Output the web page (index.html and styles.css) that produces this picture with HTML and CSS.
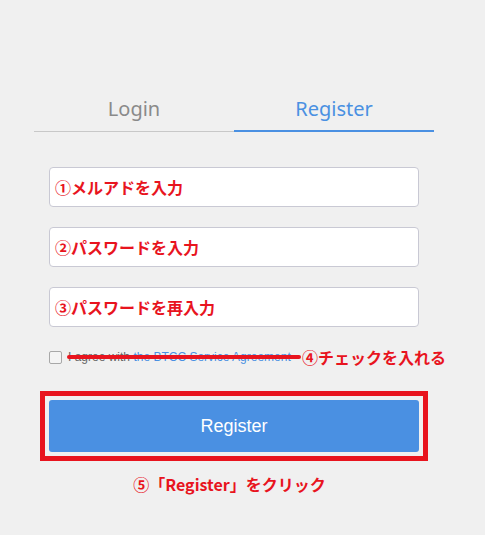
FILE: index.html
```html
<!DOCTYPE html>
<html>
<head>
<meta charset="utf-8">
<link rel="stylesheet" href="styles.css">
</head>
<body>
<div class="panel">
  <div class="tabs">
    <div class="tab">Login</div>
    <div class="tab active">Register</div>
  </div>
  <div class="form">
    <div class="field"><span class="note">①メルアドを入力</span></div>
    <div class="field"><span class="note">②パスワードを入力</span></div>
    <div class="field"><span class="note">③パスワードを再入力</span></div>
    <div class="agree">
      <span class="check"></span>
      <span class="agree-text">I agree with <span class="link">the BTCC Service Agreement</span></span>
      <span class="strike"></span>
      <span class="note note-check">④チェックを入れる</span>
    </div>
    <div class="btn-wrap">
      <button class="btn">Register</button>
      <div class="highlight"></div>
    </div>
    <div class="note note-click">⑤「Register」をクリック</div>
  </div>
</div>
</body>
</html>
```
FILE: styles.css
```css
html, body {
  margin: 0;
  padding: 0;
  background: #f0f0f0;
  width: 485px;
  height: 535px;
  overflow: hidden;
  font-family: "Noto Sans", "Noto Sans CJK JP", sans-serif;
}
.panel {
  width: 400px;
  margin-left: 34px;
  padding-top: 88px;
}
.tabs {
  display: flex;
}
.tab {
  flex: 1;
  text-align: center;
  font-size: 20px;
  line-height: 42px;
  height: 42px;
  color: #8a8a8a;
  border-bottom: 1px solid #c8c8c8;
  padding-bottom: 1px;
}
.tab.active {
  color: #4a90e2;
  border-bottom: 2px solid #4a90e2;
  padding-bottom: 0;
}
.form {
  padding: 0 15px;
  margin-top: 35px;
}
.field {
  box-sizing: border-box;
  height: 40px;
  background: #fff;
  border: 1px solid #c9c9d4;
  border-radius: 4px;
  margin-bottom: 20px;
  display: flex;
  align-items: center;
  padding-left: 5px;
}
.note {
  color: #e8141e;
  font-weight: bold;
  font-size: 16px;
  font-family: "Noto Sans CJK JP", sans-serif;
}
.agree {
  position: relative;
  display: flex;
  align-items: center;
  height: 20px;
}
.check {
  width: 11px;
  height: 11px;
  border: 1px solid #a8a8a8;
  border-radius: 2px;
  background: #f4f4f4;
  margin-right: 6px;
}
.agree-text {
  font-family: "Liberation Sans", sans-serif;
  font-size: 12px;
  color: #666;
}
.link {
  color: #4a90e2;
}
.strike {
  position: absolute;
  left: 18px;
  top: 8px;
  width: 234px;
  height: 4px;
  background: #e8141e;
  border-radius: 2px;
}
.note-check {
  position: absolute;
  left: 253px;
  top: -2px;
  white-space: nowrap;
}
.btn-wrap {
  position: relative;
  margin-top: 33px;
}
.btn {
  display: block;
  width: 100%;
  height: 52px;
  border: none;
  border-radius: 3px;
  background: #4a90e2;
  color: #fff;
  font-family: "Liberation Sans", sans-serif;
  font-size: 18px;
  padding: 0;
}
.highlight {
  position: absolute;
  left: -9px;
  top: -9px;
  right: -9px;
  bottom: -9px;
  border: 5px solid #e8141e;
  pointer-events: none;
}
.note-click {
  text-align: center;
  margin-top: 20px;
  margin-left: -9px;
}
```
